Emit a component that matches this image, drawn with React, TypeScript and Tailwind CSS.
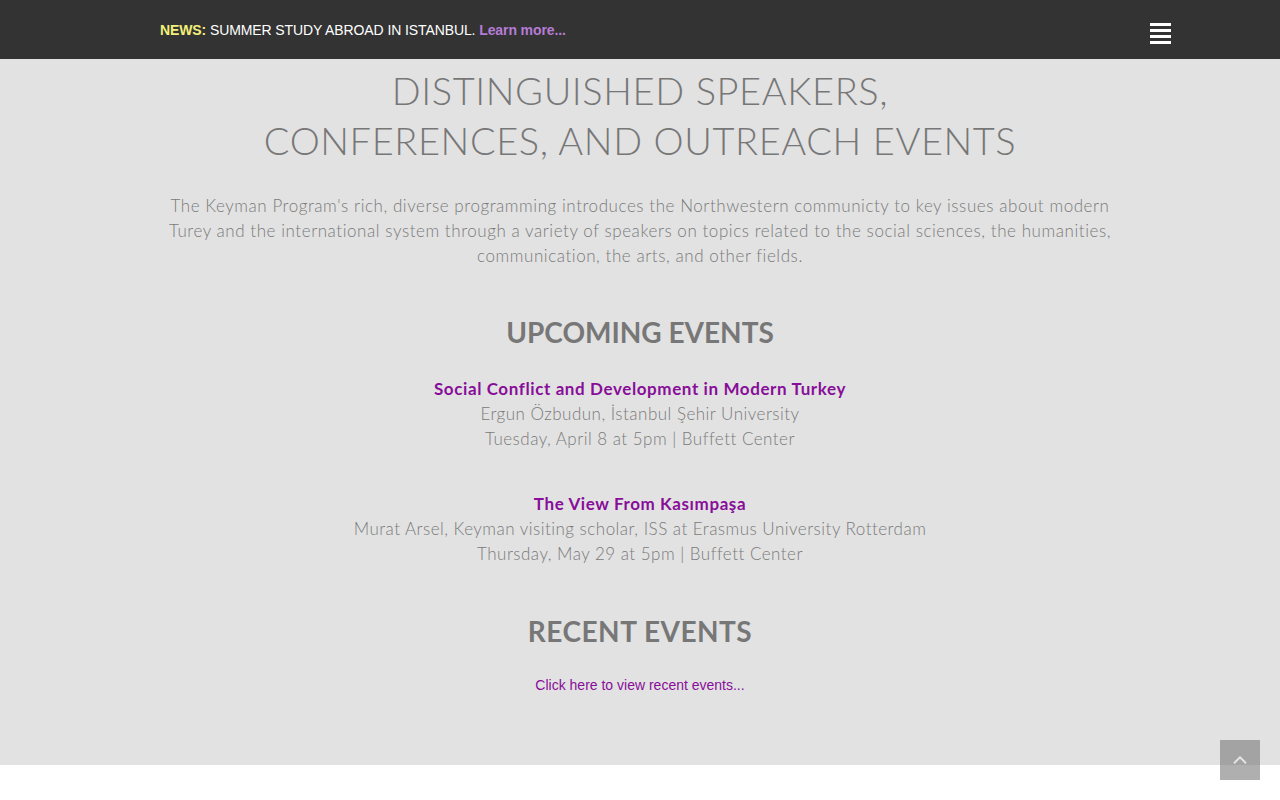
import { ChevronUp } from "lucide-react";

const raleway = { fontFamily: "Lato, 'Open Sans', sans-serif" };

type Ev = { title: string; who: string; when: string };

const upcoming: Ev[] = [
  {
    title: "Social Conflict and Development in Modern Turkey",
    who: "Ergun Özbudun, İstanbul Şehir University",
    when: "Tuesday, April 8 at 5pm | Buffett Center",
  },
  {
    title: "The View From Kasımpaşa",
    who: "Murat Arsel, Keyman visiting scholar, ISS at Erasmus University Rotterdam",
    when: "Thursday, May 29 at 5pm | Buffett Center",
  },
];

function EventItem({ ev }: { ev: Ev }) {
  return (
    <div className="text-center text-[17px] leading-[25px]">
      <a href="#" className="font-bold text-[#880e99] tracking-[0.6px]">
        {ev.title}
      </a>
      <div className="font-light text-[#7a7a7a] tracking-[0.48px]">{ev.who}</div>
      <div className="font-light text-[#7a7a7a] tracking-[0.48px]">{ev.when}</div>
    </div>
  );
}

export default function App() {
  return (
    <div className="min-h-[800px] bg-white">
      <header className="h-[59px] bg-[#333333] flex items-center justify-between pl-[160px] pr-[109px]">
        <p
          className="text-[14px] text-white mt-[1px] tracking-[-0.1px]"
          style={{ fontFamily: "'Liberation Sans', Arial, sans-serif" }}
        >
          <span className="font-bold text-[#f2f07a]">NEWS:</span> SUMMER STUDY ABROAD IN ISTANBUL.{" "}
          <a href="#" className="font-bold text-[#b57cd6]">
            Learn more...
          </a>
        </p>
        <div className="flex flex-col gap-[3px] mt-[7px]">
          <span className="block w-[21px] h-[3px] bg-white" />
          <span className="block w-[21px] h-[3px] bg-white" />
          <span className="block w-[21px] h-[3px] bg-white" />
          <span className="block w-[21px] h-[3px] bg-white" />
        </div>
      </header>

      <main className="bg-[#e2e2e2] h-[706px] flex flex-col items-center" style={raleway}>
        <h1 className="mt-[6px] text-center text-[38px] leading-[50px] font-light text-[#777777] tracking-[0.6px]">
          DISTINGUISHED SPEAKERS,
          <br />
          CONFERENCES, AND OUTREACH EVENTS
        </h1>
        <p className="mt-[28px] text-center text-[17px] leading-[25px] font-light text-[#7a7a7a] tracking-[0.56px]">
          The Keyman Program's rich, diverse programming introduces the Northwestern communicty to key issues about modern
          <br />
          Turey and the international system through a variety of speakers on topics related to the social sciences, the humanities,
          <br />
          communication, the arts, and other fields.
        </p>

        <h2 className="mt-[46px] text-[28px] leading-[36px] font-bold text-[#777777]">UPCOMING EVENTS</h2>
        <div className="mt-[26px] flex flex-col gap-[40px]">
          {upcoming.map((ev) => (
            <EventItem key={ev.title} ev={ev} />
          ))}
        </div>

        <h2 className="mt-[47px] text-[28px] leading-[36px] font-bold text-[#777777] tracking-[0.5px]">
          RECENT EVENTS
        </h2>
        <a
          href="#"
          className="mt-[26px] text-[14px] text-[#880e99]"
          style={{ fontFamily: "'Liberation Sans', Arial, sans-serif" }}
        >
          Click here to view recent events...
        </a>
      </main>

      <a
        href="#"
        className="fixed right-[20px] bottom-[20px] w-[40px] h-[40px] flex items-center justify-center bg-[#7a7a7a]/60"
      >
        <ChevronUp className="w-[22px] h-[22px] text-[#e5e5e5]" strokeWidth={2} />
      </a>
    </div>
  );
}
